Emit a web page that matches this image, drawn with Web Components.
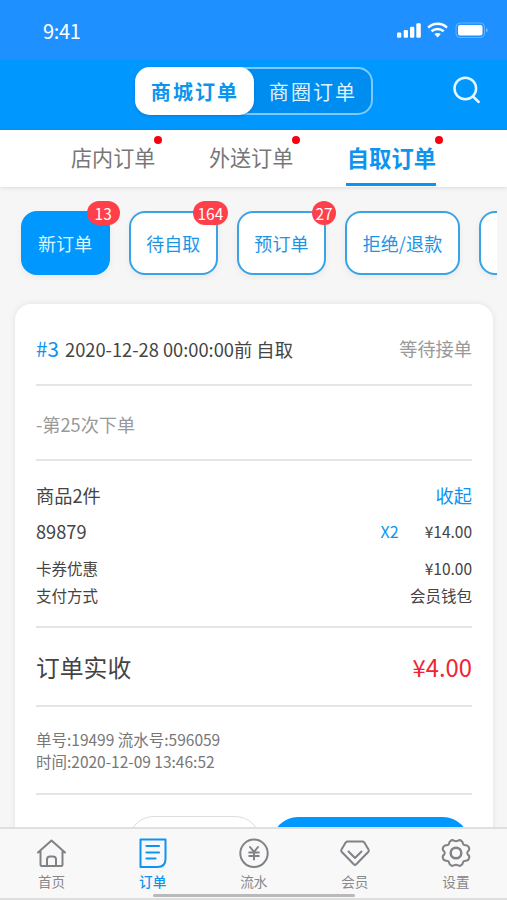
<!DOCTYPE html>
<html lang="zh-CN">
<head>
<meta charset="utf-8">
<title>自取订单</title>
<style>
html, body { margin: 0; height: 100%; overflow: hidden; }
body { font-family: "Noto Sans CJK SC", sans-serif; color: #444; background: #f6f6f6; }
</style>
</head>
<body>
<order-app></order-app>
<script>
const define = (name, html, setup) => customElements.define(name, class extends HTMLElement {
  connectedCallback() {
    if (this.shadowRoot) return;
    const t = document.createElement('template');
    t.innerHTML = html;
    this.attachShadow({ mode: 'open' }).append(t.content.cloneNode(true));
    if (setup) setup(this, this.shadowRoot);
  }
});

define('status-bar', `
<style>
:host { display: flex; height: 60px; box-sizing: border-box; padding: 2px 18px 0 43px; align-items: center; justify-content: space-between; background: #1e90ff; color: #fff; font-size: 20px; line-height: 30px; letter-spacing: -.3px; }
svg { display: block; }
</style>
<span>9:41</span>
<svg width="92" height="18" viewBox="0 0 92 18" fill="#fff">
  <rect x="0" y="10.5" width="4.300" height="5.2" rx="1.2"/><rect x="6.700" y="8" width="4.300" height="7.7" rx="1.2"/>
  <rect x="13" y="4.7" width="4.300" height="11" rx="1.2"/><rect x="19.3" y="1.3" width="4.500" height="14.4" rx="1.2"/>
  <g fill="none" stroke="#fff" stroke-width="2.5"><path d="M31.2 5.6C36.7.6 44.500.6 50 5.600"/><path d="M34.500 9.300c3.500-3.100 8.700-3.100 12.200 0"/></g>
  <path d="M37.400 12c1.900-1.500 4.500-1.500 6.400 0l-3.200 3.500z"/>
  <rect x="59" y="1" width="28.500" height="14.500" rx="4" fill="none" stroke="#fff" stroke-opacity=".3"/>
  <rect x="61" y="3" width="24.500" height="10.500" rx="2"/><path d="M89 6v4.500q1.800-.8 1.800-2.250T89 6" opacity=".35"/>
</svg>`);

define('segment-header', `
<style>
:host { display: grid; grid-template-columns: 1fr 238px 1fr; height: 70px; box-sizing: border-box; padding-top: 7px; background: #0097ff; align-items: start; }
.seg { grid-column: 2; display: flex; box-sizing: border-box; height: 48px; border: 2px solid #7ccaff; border-radius: 15px; background: #008df0; color: #dff3ff; font-size: 20px; letter-spacing: 2.1px; line-height: 46px; text-align: center; }
.seg span { flex: 1; padding-left: 2px; box-sizing: border-box; }
.seg .on { flex: 0 0 119px; margin: -2px 0 -2px -2px; line-height: 49px; background: #fff; color: #0d94ec; border-radius: 15px; font-weight: 700; box-shadow: 0 1px 3px #0068b888; }
svg { justify-self: end; margin: 8px 25px 0 0; }
</style>
<div class="seg"><span class="on">商城订单</span><span>商圈订单</span></div>
<svg width="30" height="30" viewBox="0 0 30 30" fill="none" stroke="#e6f7ff" stroke-width="2.500" stroke-linecap="round"><circle cx="13.300" cy="13.500" r="10.800"/><path d="m21 21.500 5.700 5.500"/></svg>`);

define('order-tabs', `
<style>
:host { display: flex; height: 56.500px; box-sizing: border-box; background: #fff; padding-left: 71px; gap: 53.500px; box-shadow: 0 1px 4px #0000001c; position: relative; }
</style><slot></slot>`);

define('order-tab', `
<style>
:host { display: block; position: relative; font-size: 21.100px; line-height: 55px; color: #777; height: 55.500px; white-space: nowrap; box-sizing: border-box; }
:host([active]) { color: #0d94f0; font-weight: 700; font-size: 22.300px; border-bottom: 3px solid #0d94f0; padding: 0 0 0 1px; margin-left: -1px; line-height: 55px; }
i { position: absolute; width: 8px; height: 8px; border-radius: 50%; background: #f60012; top: 6px; right: -7px; }
</style><slot></slot><i></i>`);

define('filter-row', `
<style>
:host { display: flex; gap: 19px; padding: 24px 0 0 20.500px; margin-right: 10px; height: 93.500px; overflow: hidden; box-sizing: border-box; }
</style><slot></slot>`);

define('filter-chip', `
<style>
:host { flex: 0 0 89.200px; height: 64px; box-sizing: border-box; position: relative; border: 2px solid #3aa3e6; border-radius: 16px; background: #fff; color: #1e95e4; font-size: 18px; line-height: 60px; text-align: center; box-shadow: 0 3px 7px #0000000d; letter-spacing: .1px; }
:host([active]) { background: #0097ff; border-color: #0097ff; color: #dff5ff; }
:host([wide]) { flex-basis: 114.800px; }
b { position: absolute; top: -12px; right: -12px; height: 24px; box-sizing: border-box; border-radius: 12px; background: #ff3f49; color: #fff; font: 400 15.500px/24px "Noto Sans CJK SC", sans-serif; letter-spacing: 0; width: var(--w); }
b:empty { display: none; }
</style><slot></slot><b></b>`, (el, root) => {
  const b = root.querySelector('b');
  b.textContent = el.getAttribute('count') || '';
  b.style.setProperty('--w', (el.getAttribute('badge') || 24) + 'px');
});

define('order-card', `
<style>
:host { display: block; margin: 23.500px 14px 0 15px; height: 620px; padding: 0 21px 0 21px; background: #fff; border-radius: 16px; box-shadow: 0 0 6px #00000016; }
</style><slot></slot>`);

define('card-section', `
<style>
:host { display: flex; flex-direction: column; box-sizing: border-box; border-bottom: 2px solid #e5e5e5; }
</style><slot></slot>`);

define('order-line', `
<style>
:host { display: flex; align-items: center; white-space: pre; }
slot { display: block; } slot[name=end] { margin-left: auto; }
</style><slot></slot><slot name="end"></slot>`);

define('card-actions', `
<style>
:host { display: flex; justify-content: flex-end; gap: 11px; padding: 20.500px 3px 0 0; }
div { box-sizing: border-box; height: 52px; border-radius: 26px; }
.sub { width: 133px; border: 1.500px solid #ddd; background: #fff; }
.main { width: 197px; background: #0097ff; margin-top: 1px; }
</style><div class="sub"></div><div class="main"></div>`);

define('tab-bar', `
<style>
:host { position: absolute; left: 0; right: 0; bottom: 0; height: 73px; box-sizing: border-box; display: grid; grid-template-columns: repeat(5, 101.100px); padding-left: 1px; background: #f8f8f9; border-top: 2px solid #dfdfdf; border-bottom: 2px solid #dedede; }
i { position: absolute; left: 153px; width: 202px; height: 3px; bottom: 1.500px; border-radius: 2px; background: #b9b9ba; }
</style><slot></slot><i></i>`);

const icons = {
  home: '<path d="M3 15.500 16.500 3.500l13.500 12M5.500 14v13.500q0 1.500 1.500 1.500h19q1.500 0 1.500-1.500V14M12 29v-6.500q0-3 3-3h3q3 0 3 3V29"/>',
  order: '<path d="M4.500 2.500H29.500v19.500q0 8-8 8H4.500z"/><path d="M10.500 9h12.500M10.500 15.500h12.500M10.500 21.500h9" stroke-width="2.200"/>',
  flow: '<circle cx="17" cy="16.300" r="13.700"/><path d="m13 10 4 5 4-5M17 15v7.500M12.200 15.500h9.600M12.200 19h9.600" stroke-width="2"/>',
  vip: '<path d="M9.500 4.500h15q1 0 1.700.8L30.500 12.500q.8 1.300-.3 2.500L18 27.500q-1 1-2 0L3.800 15q-1.100-1.200-.3-2.500L7.800 5.300q.7-.8 1.700-.8z"/><path d="m10.500 14.500 6.500 6.500 6.500-6.500"/>',
  gear: '<path d="M11.200 4.200q2-1.800 3.700-.5 2.100 1.100 4.200 0 1.700-1.300 3.700.5 1.200 1 1.100 2.500 1 1.800 3 1.500 2.300.1 3.200 2.600.7 2.500-1.300 3.500-1.200 1.700 0 3.400 2 1 1.300 3.500-.9 2.500-3.200 2.600-2-.3-3 1.500.1 1.500-1.100 2.500-2 1.800-3.700.5-2.100-1.100-4.200 0-1.700 1.300-3.700-.5-1.200-1-1.100-2.500-1-1.800-3-1.500-2.300-.1-3.200-2.600-.7-2.500 1.300-3.500 1.200-1.700 0-3.400-2-1-1.300-3.500.9-2.500 3.200-2.600 2 .3 3-1.500-.1-1.500 1.100-2.500z"/><circle cx="17" cy="16" r="5.300" stroke-width="2.500"/>'
};

define('nav-item', `
<style>
:host { display: flex; flex-direction: column; align-items: center; padding-top: 7.500px; color: #87888b; font-size: 13.600px; line-height: 20px; }
:host([active]) { color: #0d94f2; font-weight: 500; }
svg { display: block; width: 34px; height: 34px; margin-bottom: 0.500px; fill: none; stroke: #808286; stroke-width: 2; stroke-linecap: round; stroke-linejoin: round; }
:host([active]) svg { stroke: #0d94f2; }
</style><svg viewBox="0 0 34 34"></svg><slot></slot>`, (el, root) => {
  root.querySelector('svg').innerHTML = icons[el.getAttribute('icon')];
});

define('order-app', `
<style>
:host { display: block; width: 507px; height: 900px; position: relative; overflow: hidden; background: #f6f6f6; }
.head { height: 82.500px; padding-top: 9.500px; font-size: 18.300px; }
.head order-line { height: 70px; }
.id { color: #0d94f2; font-size: 20.500px; display: inline-block; width: 29px; }
.grey { color: #999; font-size: 18.200px; }
.blue { color: #0d94f2; }
.times { height: 75px; padding-top: 3px; color: #999; font-size: 18.200px; }
.times order-line { height: 70px; }
.goods { height: 167px; padding-top: 20px; font-size: 15.500px; }
.goods order-line { height: 27px; }
.big { font-size: 18.200px; }
.title { margin-bottom: 9px; }
.item { margin-bottom: 10px; }
.qty { display: inline-block; margin-right: 26px; font-size: 16px; }
.total { height: 78.500px; font-size: 23.800px; }
.total order-line { height: 79px; }
.red { color: #ed2633; }
.meta { height: 88.500px; padding-top: 21px; color: #777; font-size: 15.500px; }
.meta order-line { height: 22.500px; }
</style>
<status-bar></status-bar>
<segment-header></segment-header>
<order-tabs><order-tab>店内订单</order-tab><order-tab>外送订单</order-tab><order-tab active>自取订单</order-tab></order-tabs>
<filter-row>
  <filter-chip active count="13" badge="33">新订单</filter-chip>
  <filter-chip count="164" badge="35">待自取</filter-chip>
  <filter-chip count="27" badge="24">预订单</filter-chip>
  <filter-chip wide>拒绝/退款</filter-chip>
  <filter-chip></filter-chip>
</filter-row>
<order-card>
  <card-section class="head"><order-line><span class="id">#3</span>2020-12-28 00:00:00前 自取<span slot="end" class="grey">等待接单</span></order-line></card-section>
  <card-section class="times"><order-line>-第25次下单</order-line></card-section>
  <card-section class="goods">
    <order-line class="title big">商品2件<span slot="end" class="blue">收起</span></order-line>
    <order-line class="item"><span class="big">89879</span><span slot="end"><span class="qty blue">X2</span>¥14.00</span></order-line>
    <order-line>卡券优惠<span slot="end">¥10.00</span></order-line>
    <order-line>支付方式<span slot="end">会员钱包</span></order-line>
  </card-section>
  <card-section class="total"><order-line>订单实收<span slot="end" class="red">¥4.00</span></order-line></card-section>
  <card-section class="meta"><order-line>单号:19499 流水号:596059</order-line><order-line>时间:2020-12-09 13:46:52</order-line></card-section>
  <card-actions></card-actions>
</order-card>
<tab-bar>
  <nav-item icon="home">首页</nav-item><nav-item icon="order" active>订单</nav-item><nav-item icon="flow">流水</nav-item><nav-item icon="vip">会员</nav-item><nav-item icon="gear">设置</nav-item>
</tab-bar>`);
</script>
</body>
</html>
